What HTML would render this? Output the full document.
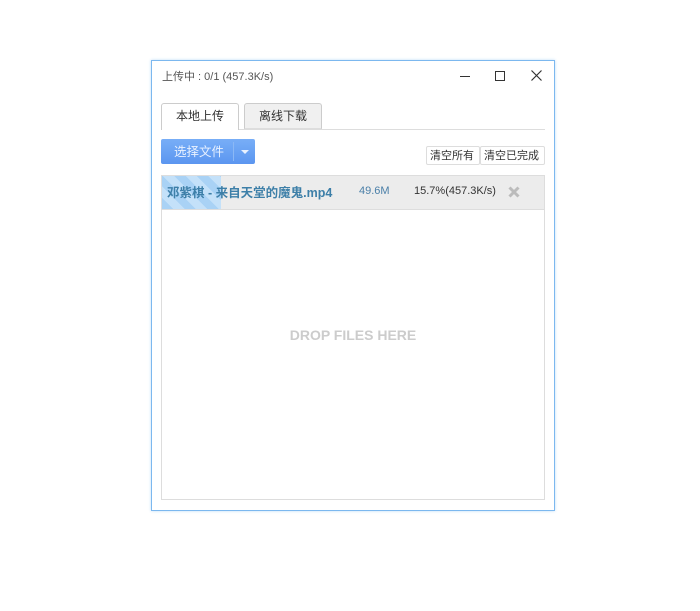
<!DOCTYPE html>
<html><head><meta charset="utf-8"><style>
body{margin:0;width:700px;height:611px;background:#fff;position:relative;font-family:"Liberation Sans","Noto Sans CJK SC",sans-serif;overflow:hidden}
.win{position:absolute;left:151px;top:60px;width:402px;height:449px;border:1px solid #7cb8ef;box-shadow:0 0 3px #bfdcf7;background:#fff}
.t{position:absolute;font-size:11px;color:#555}
.tab{position:absolute;top:42px;height:26px;border:1px solid #ccc;border-bottom:none;border-radius:3px 3px 0 0;font-size:12px;text-align:center;line-height:24px;color:#333;box-sizing:border-box}
.btn{position:absolute;left:9px;top:78px;width:94px;height:25px;background:linear-gradient(#78aef7,#5b96f0);border-radius:2px;color:#e8f1ff;font-size:12.5px}
.cb{position:absolute;top:85px;height:19px;border:1px solid #ddd;font-size:11px;line-height:18px;color:#333;box-sizing:border-box;padding:0 3px;border-radius:2px}
</style></head><body>
<div class="win">
<div class="t" style="left:10px;top:7px">上传中 : 0/1 (457.3K/s)</div>
<div style="position:absolute;left:308px;top:15px;width:10px;height:1px;background:#333"></div>
<div style="position:absolute;left:343px;top:10px;width:8px;height:8px;border:1px solid #333"></div>
<svg style="position:absolute;left:379px;top:9px" width="11" height="11"><path d="M0.5 0.5L10.5 10.5M10.5 0.5L0.5 10.5" stroke="#333" stroke-width="1.2"/></svg>
<div style="position:absolute;left:9px;top:68px;width:384px;height:1px;background:#ddd"></div>
<div class="tab" style="left:9px;width:78px;background:#fff;height:27px">本地上传</div>
<div class="tab" style="left:92px;width:78px;background:#f0f0f0;border-bottom:1px solid #ddd">离线下载</div>
<div class="btn"><span style="position:absolute;left:13px;top:2px">选择文件</span><div style="position:absolute;left:72px;top:3px;width:1px;height:19px;background:#8bb8f5"></div><div style="position:absolute;left:80px;top:11px;border:4px solid transparent;border-top-color:#e8f1ff;border-bottom:none"></div></div>
<div class="cb" style="left:274px;width:54px">清空所有</div>
<div class="cb" style="left:328px;width:65px">清空已完成</div>
<div style="position:absolute;left:9px;top:114px;width:384px;height:325px;border:1px solid #ddd;box-sizing:border-box">
<div style="position:absolute;left:0;top:0;width:382px;height:33px;background:#ececec;border-bottom:1px solid #ddd"></div>
<div style="position:absolute;left:0;top:0;width:59px;height:33px;background:repeating-linear-gradient(45deg,#a9d2f5 0 8px,#c4e1f9 8px 16px)"></div>
<div style="position:absolute;left:5px;top:6px;font-size:12.5px;font-weight:bold;color:#3d7fa8">邓紫棋 - 来自天堂的魔鬼.mp4</div>
<div style="position:absolute;left:197px;top:9px;font-size:11px;color:#4a7fa8">49.6M</div>
<div style="position:absolute;left:252px;top:9px;font-size:11px;color:#333">15.7%(457.3K/s)</div>
<svg style="position:absolute;left:346px;top:10px" width="12" height="12"><path d="M1.5 1.5L10.5 10.5M10.5 1.5L1.5 10.5" stroke="#bbb" stroke-width="3"/></svg>
<div style="position:absolute;left:0;width:382px;top:151px;text-align:center;font-size:14px;font-weight:bold;color:#ccc">DROP FILES HERE</div>
</div>
</div>
</body></html>
